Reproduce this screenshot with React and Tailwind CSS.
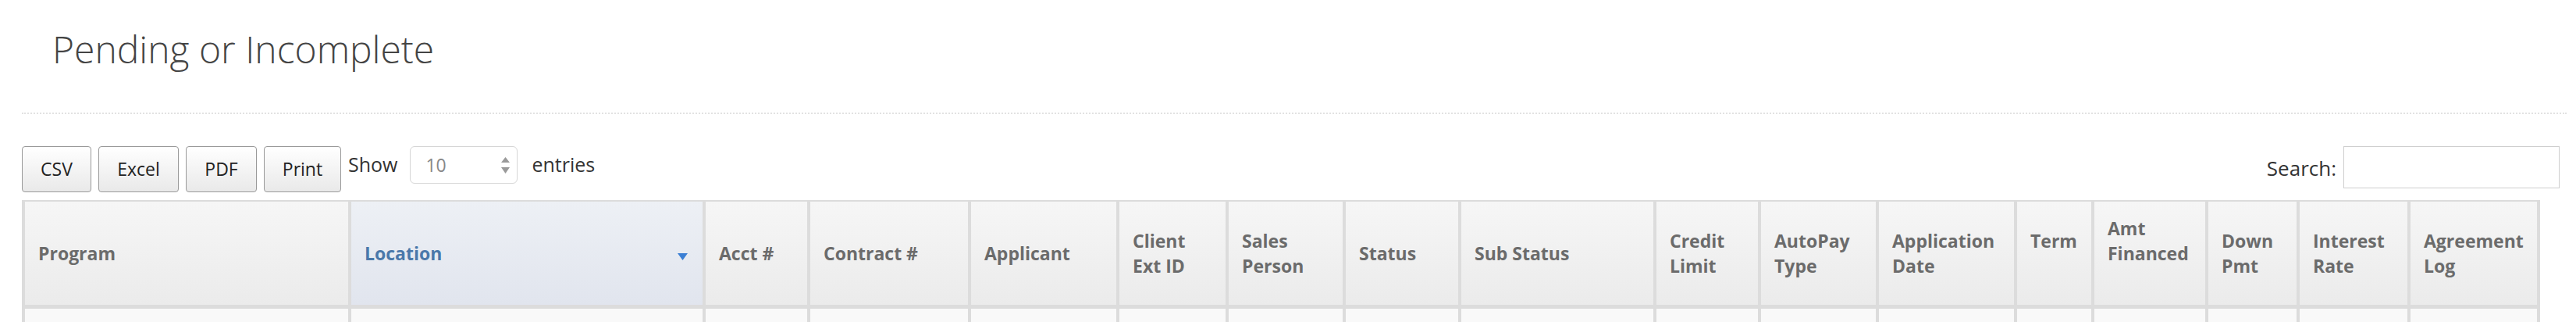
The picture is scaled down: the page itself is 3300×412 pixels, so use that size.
import React from "react";

const columns = [
  { key: "program", lines: ["Program"] },
  { key: "location", lines: ["Location"], sorted: true },
  { key: "acct", lines: ["Acct #"] },
  { key: "contract", lines: ["Contract #"] },
  { key: "applicant", lines: ["Applicant"] },
  { key: "clientExt", lines: ["Client", "Ext ID"] },
  { key: "sales", lines: ["Sales", "Person"] },
  { key: "status", lines: ["Status"] },
  { key: "subStatus", lines: ["Sub Status"] },
  { key: "credit", lines: ["Credit", "Limit"] },
  { key: "autopay", lines: ["AutoPay", "Type"] },
  { key: "appDate", lines: ["Application", "Date"] },
  { key: "term", lines: ["Term", "\u00a0"] },
  { key: "amt", lines: ["Amt", "Financed", "\u00a0"] },
  { key: "down", lines: ["Down", "Pmt"] },
  { key: "rate", lines: ["Interest", "Rate"] },
  { key: "log", lines: ["Agreement", "Log"] },
];

const exportButtons = [
  { label: "CSV", w: "w-[89px]" },
  { label: "Excel", w: "w-[103px]" },
  { label: "PDF", w: "w-[91px]" },
  { label: "Print", w: "w-[99px]" },
];

function SortArrow() {
  return (
    <svg width="13" height="9" viewBox="0 0 13 9" className="absolute right-[19px] top-[66px]">
      <polygon points="0,0 13,0 6.5,9" fill="#3b7fd4" />
    </svg>
  );
}

function SelectArrows() {
  return (
    <svg width="11" height="21" viewBox="0 0 11 21">
      <polygon points="5.5,0 11,7 0,7" fill="#9a9a9a" />
      <polygon points="0,13 11,13 5.5,21" fill="#9a9a9a" />
    </svg>
  );
}

export default function App() {
  return (
    <div className="w-[3300px] h-[412px] overflow-hidden bg-white font-['Open_Sans',sans-serif] text-[#333]">
      <div className="pl-[28px] pr-[12px]">
        <div className="h-[146px] border-b-2 border-dotted border-[#e2e2e2] pl-[39px] pt-[39px]">
          <h1 className="text-[48px] font-light leading-none text-[#444]">Pending or Incomplete</h1>
        </div>

        <div className="mt-[41px] flex items-start justify-between">
          <div className="flex items-start gap-[9px]">
            {exportButtons.map((b) => (
              <button
                key={b.label}
                className={`${b.w} h-[59px] border border-[#999] rounded-[4px] bg-linear-to-b from-white to-[#e9e9e9] text-[23px] text-[#222]`}
              >
                {b.label}
              </button>
            ))}
            <label className="flex items-center h-[48px] text-[25px] text-[#333]">
              <span>Show</span>
              <div className="ml-[16px] mr-[18px] w-[138px] h-[48px] border border-[#d6d6d6] rounded-[6px] flex items-center justify-between pl-[19px] pr-[9px]">
                <span className="text-[23px] text-[#888]">10</span>
                <SelectArrows />
              </div>
              <span>entries</span>
            </label>
          </div>

          <label className="mr-[9px] flex items-center gap-[9px] text-[26px] text-[#333]">
            <span className="pt-[2px]">Search:</span>
            <input type="search" className="w-[277px] h-[54px] border border-[#cfcfcf] bg-white outline-none" />
          </label>
        </div>

        <div className="mt-[10px] w-[3226px] border-l-4 border-t-2 border-[#dcdcdc] grid grid-cols-[418px_454px_134px_206px_190px_140px_150px_148px_250px_134px_151px_177px_99px_146px_117px_142px_166px]">
          {columns.map((c) => (
            <div
              key={c.key}
              className={`relative h-[137px] flex items-center pl-[17px] pr-[8px] border-r-4 border-b-[5px] border-[#dcdcdc] text-[23px] font-bold leading-[32px] ${
                c.sorted
                  ? "bg-linear-to-b from-[#edf0f5] to-[#e1e5ee] text-[#4a78aa]"
                  : "bg-linear-to-b from-[#f6f6f6] to-[#ebebeb] text-[#6b6b6b]"
              }`}
            >
              <div>
                {c.lines.map((l, i) => (
                  <div key={i} className="whitespace-nowrap">{l}</div>
                ))}
              </div>
              {c.sorted && <SortArrow />}
            </div>
          ))}
          {columns.map((c) => (
            <div key={`${c.key}-cell`} className="h-[40px] bg-[#f9f9f9] border-r-4 border-[#dcdcdc]" />
          ))}
        </div>
      </div>
    </div>
  );
}
